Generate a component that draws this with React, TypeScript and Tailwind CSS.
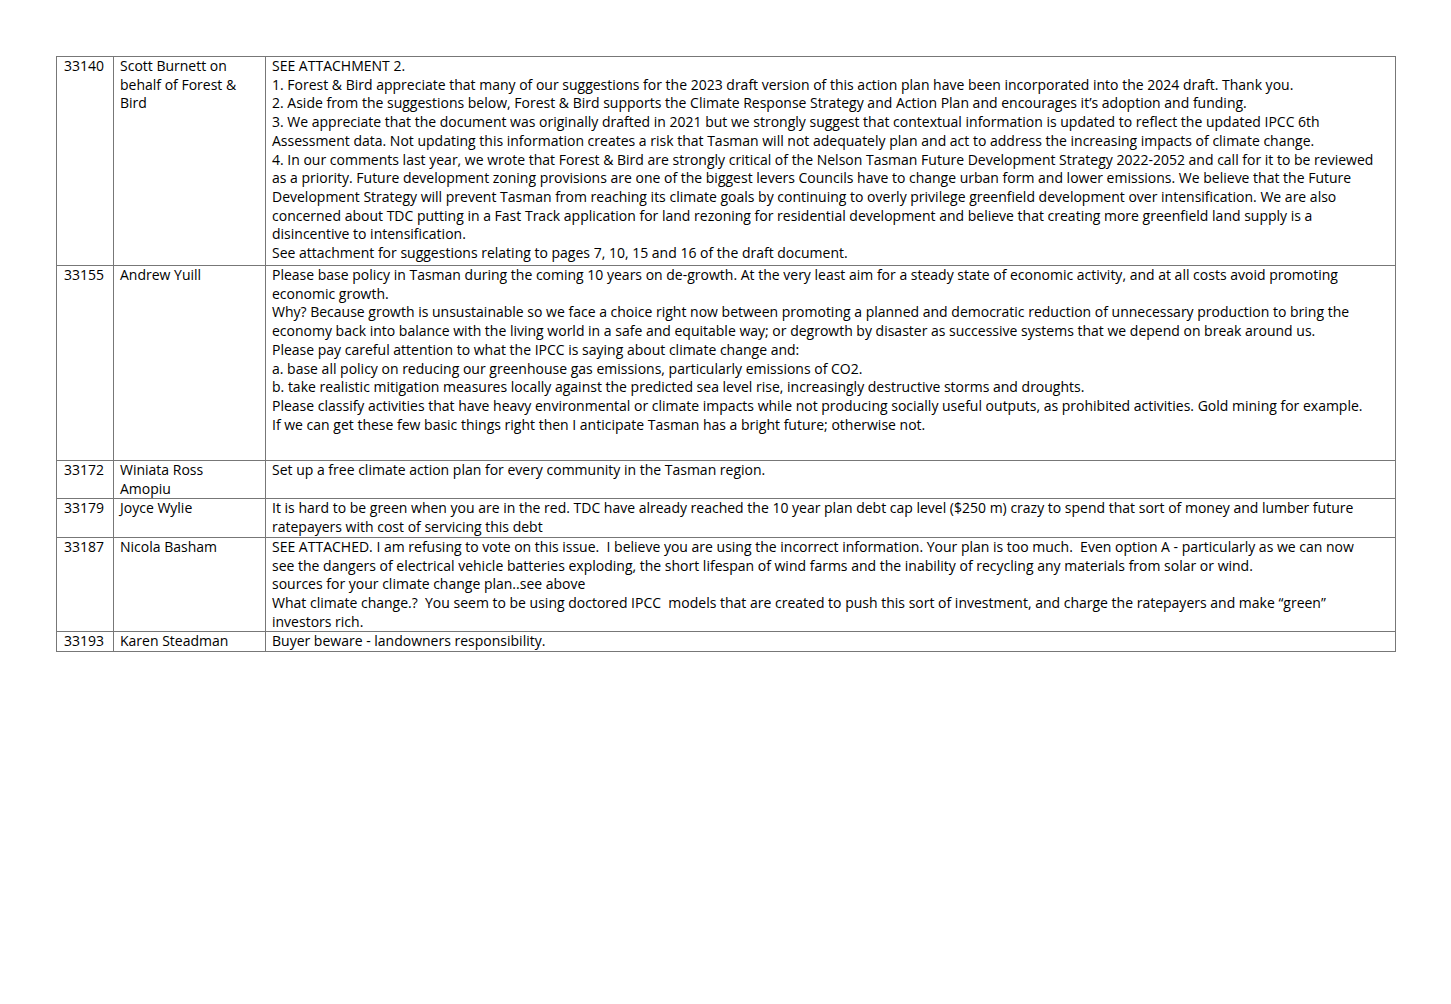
const rows = [
  {
    id: "33140",
    name: ["Scott Burnett on", "behalf of Forest &", "Bird"],
    h: "h-[209px]",
    lines: [
      "SEE ATTACHMENT 2.",
      "1. Forest & Bird appreciate that many of our suggestions for the 2023 draft version of this action plan have been incorporated into the 2024 draft. Thank you.",
      "2. Aside from the suggestions below, Forest & Bird supports the Climate Response Strategy and Action Plan and encourages it\u2019s adoption and funding.",
      "3. We appreciate that the document was originally drafted in 2021 but we strongly suggest that contextual information is updated to reflect the updated IPCC 6th",
      "Assessment data. Not updating this information creates a risk that Tasman will not adequately plan and act to address the increasing impacts of climate change.",
      "4. In our comments last year, we wrote that Forest & Bird are strongly critical of the Nelson Tasman Future Development Strategy 2022-2052 and call for it to be reviewed",
      "as a priority. Future development zoning provisions are one of the biggest levers Councils have to change urban form and lower emissions. We believe that the Future",
      "Development Strategy will prevent Tasman from reaching its climate goals by continuing to overly privilege greenfield development over intensification. We are also",
      "concerned about TDC putting in a Fast Track application for land rezoning for residential development and believe that creating more greenfield land supply is a",
      "disincentive to intensification.",
      "See attachment for suggestions relating to pages 7, 10, 15 and 16 of the draft document.",
    ],
  },
  {
    id: "33155",
    name: ["Andrew Yuill"],
    h: "h-[195px]",
    lines: [
      "Please base policy in Tasman during the coming 10 years on de-growth. At the very least aim for a steady state of economic activity, and at all costs avoid promoting",
      "economic growth.",
      "Why? Because growth is unsustainable so we face a choice right now between promoting a planned and democratic reduction of unnecessary production to bring the",
      "economy back into balance with the living world in a safe and equitable way; or degrowth by disaster as successive systems that we depend on break around us.",
      "Please pay careful attention to what the IPCC is saying about climate change and:",
      "a. base all policy on reducing our greenhouse gas emissions, particularly emissions of CO2.",
      "b. take realistic mitigation measures locally against the predicted sea level rise, increasingly destructive storms and droughts.",
      "Please classify activities that have heavy environmental or climate impacts while not producing socially useful outputs, as prohibited activities. Gold mining for example.",
      "If we can get these few basic things right then I anticipate Tasman has a bright future; otherwise not.",
    ],
  },
  {
    id: "33172",
    name: ["Winiata Ross", "Amopiu"],
    h: "h-[38px]",
    lines: ["Set up a free climate action plan for every community in the Tasman region."],
  },
  {
    id: "33179",
    name: ["Joyce Wylie"],
    h: "h-[38px]",
    lines: [
      "It is hard to be green when you are in the red. TDC have already reached the 10 year plan debt cap level ($250 m) crazy to spend that sort of money and lumber future",
      "ratepayers with cost of servicing this debt",
    ],
  },
  {
    id: "33187",
    name: ["Nicola Basham"],
    h: "h-[93px]",
    lines: [
      "SEE ATTACHED. I am refusing to vote on this issue.\u00a0 I believe you are using the incorrect information. Your plan is too much.\u00a0 Even option A - particularly as we can now",
      "see the dangers of electrical vehicle batteries exploding, the short lifespan of wind farms and the inability of recycling any materials from solar or wind.",
      "sources for your climate change plan..see above",
      "What climate change.?\u00a0 You seem to be using doctored IPCC\u00a0 models that are created to push this sort of investment, and charge the ratepayers and make \u201cgreen\u201d",
      "investors rich.",
    ],
  },
  {
    id: "33193",
    name: ["Karen Steadman"],
    h: "h-[20px]",
    lines: ["Buyer beware - landowners responsibility."],
  },
];

function Lines({ items }: { items: string[] }) {
  return (
    <>
      {items.map((t, i) => (
        <div key={i} className="whitespace-pre leading-[18.7px]">
          {t}
        </div>
      ))}
    </>
  );
}

export default function App() {
  return (
    <div className="min-h-[1004px] w-[1451px] bg-white pl-[56px] pt-[56px] font-['Open_Sans',_'Noto_Sans',_sans-serif] text-[14px] text-black">
      <table className="w-[1340px] table-fixed border-collapse">
        <colgroup>
          <col className="w-[57px]" />
          <col className="w-[152px]" />
          <col />
        </colgroup>
        <tbody>
          {rows.map((r) => (
            <tr key={r.id} className={r.h}>
              <td className="border border-[#777] px-[7px] py-0 align-top">
                <Lines items={[r.id]} />
              </td>
              <td className="border border-[#777] px-[6px] py-0 align-top">
                <Lines items={r.name} />
              </td>
              <td className="border border-[#777] px-[6px] py-0 align-top">
                <Lines items={r.lines} />
              </td>
            </tr>
          ))}
        </tbody>
      </table>
    </div>
  );
}
